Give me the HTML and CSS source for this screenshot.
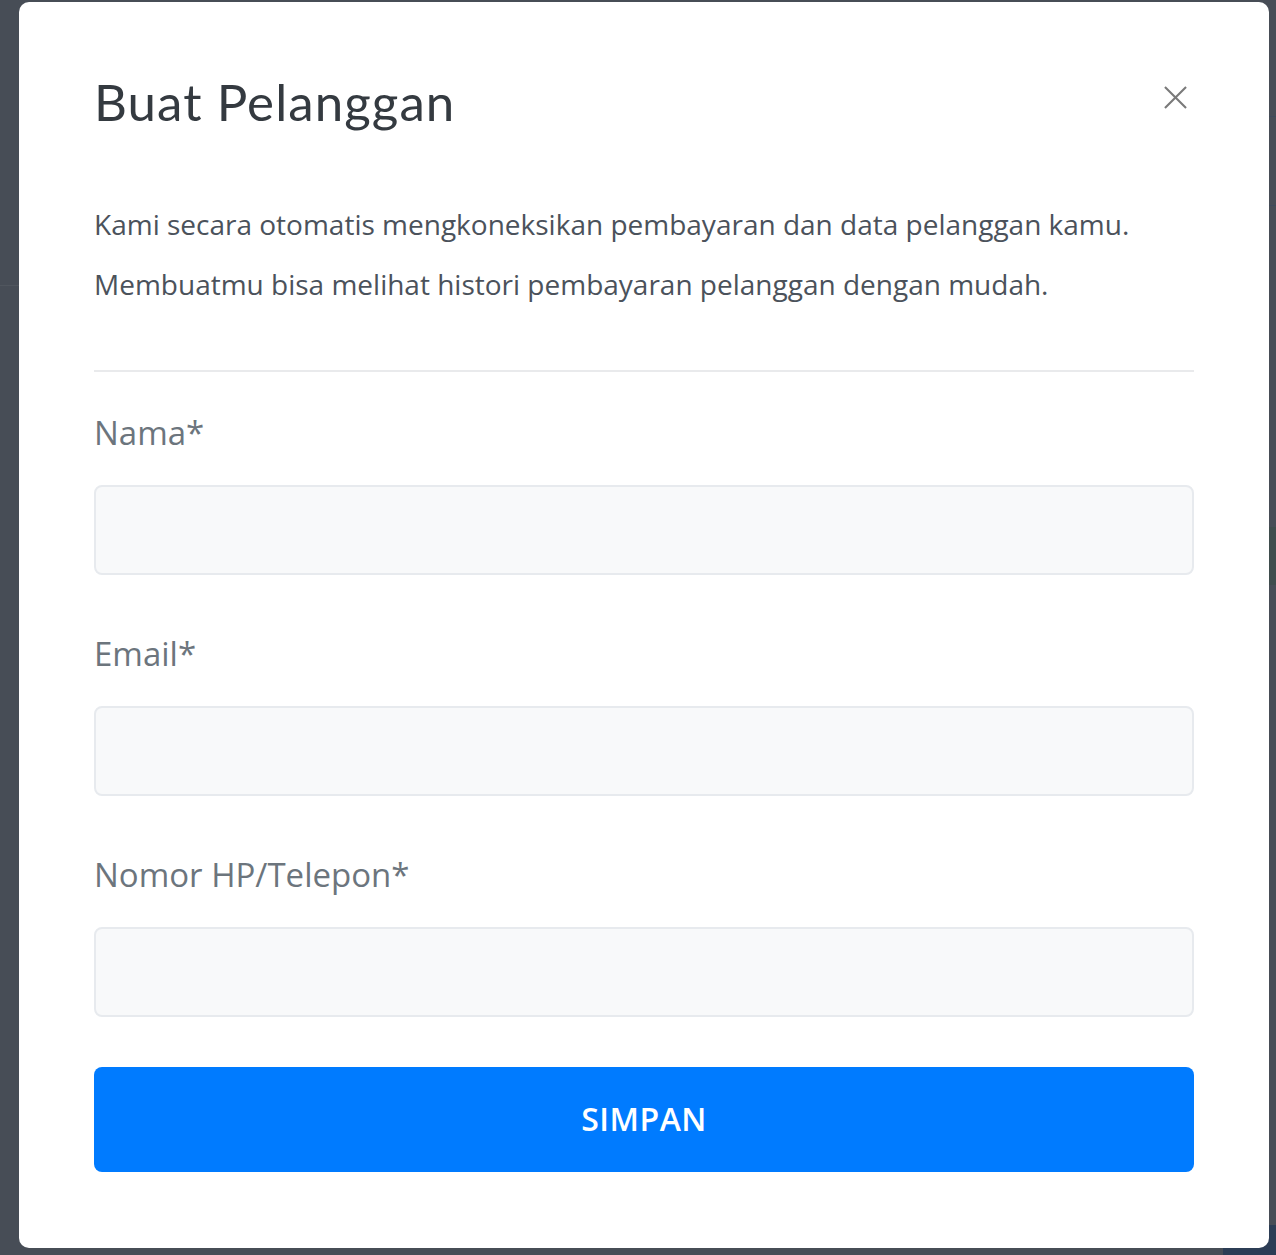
FILE: index.html
```html
<!DOCTYPE html>
<html lang="id">
<head>
<meta charset="utf-8">
<title>Buat Pelanggan</title>
<link rel="stylesheet" href="styles.css">
</head>
<body>
<div class="backdrop">
  <div class="modal" role="dialog" aria-labelledby="modal-title">
    <div class="modal-header">
      <h1 class="modal-title" id="modal-title">Buat Pelanggan</h1>
      <button class="close-btn" type="button" aria-label="Tutup">
        <svg width="24" height="24" viewBox="0 0 24 24" aria-hidden="true">
          <path d="M1 1 L23 23 M23 1 L1 23" stroke="#7a7a7a" stroke-width="2.2" stroke-linecap="butt" fill="none"/>
        </svg>
      </button>
    </div>
    <div class="modal-desc">
      <p>Kami secara otomatis mengkoneksikan pembayaran dan data pelanggan kamu.</p>
      <p>Membuatmu bisa melihat histori pembayaran pelanggan dengan mudah.</p>
    </div>
    <hr class="divider">
    <form class="form">
      <div class="field">
        <label class="label" for="nama">Nama*</label>
        <input class="input" id="nama" type="text">
      </div>
      <div class="field">
        <label class="label" for="email">Email*</label>
        <input class="input" id="email" type="email">
      </div>
      <div class="field">
        <label class="label" for="telp">Nomor HP/Telepon*</label>
        <input class="input" id="telp" type="tel">
      </div>
      <button class="submit" type="button">SIMPAN</button>
    </form>
  </div>
</div>
</body>
</html>
```
FILE: styles.css
```css
html, body {
  margin: 0;
  padding: 0;
  height: 100%;
}

body {
  font-family: "Open Sans", "Noto Sans", sans-serif;
  background-color: #474d56;
  background-image:
    linear-gradient(#2c3d55, #2c3d55),
    linear-gradient(#3e4a5c, #3e4a5c),
    linear-gradient(#3e4a5c, #3e4a5c),
    linear-gradient(#3f4d4d, #3f4d4d),
    linear-gradient(#50565e, #50565e);
  background-repeat: no-repeat;
  background-size: 53px 30px, 20px 1px, 20px 1px, 20px 58px, 19px 1px;
  background-position: 1223px 1225px, 1256px 116px, 1256px 205px, 1256px 527px, 0 285px;
}

.backdrop {
  position: fixed;
  inset: 0;
}

.modal {
  position: absolute;
  left: 19px;
  top: 2px;
  width: 1250px;
  height: 1246px;
  box-sizing: border-box;
  padding: 75px;
  background: #ffffff;
  border-radius: 10px;
  display: flex;
  flex-direction: column;
}

.modal-header {
  display: flex;
  justify-content: space-between;
  align-items: flex-start;
  margin-bottom: 67px;
}

.modal-title {
  margin: 0;
  font-family: "Lato", "Open Sans", sans-serif;
  font-weight: 400;
  font-size: 51px;
  line-height: 50px;
  letter-spacing: 1.1px;
  color: #343a40;
}

.close-btn {
  width: 40px;
  height: 40px;
  padding: 0;
  margin: 0;
  border: 0;
  background: transparent;
  display: flex;
  align-items: center;
  justify-content: center;
  cursor: pointer;
  margin-right: -1px;
}

.close-btn svg {
  width: 23px;
  height: 23px;
}

.modal-desc {
  margin-bottom: 56px;
}

.modal-desc p {
  margin: 0;
  font-size: 28px;
  line-height: 60px;
  color: #4b525b;
}

.divider {
  margin: 0;
  border: 0;
  border-top: 2px solid #e9eaec;
}

.form {
  display: flex;
  flex-direction: column;
  margin-top: 35px;
}

.field {
  display: flex;
  flex-direction: column;
  margin-bottom: 53px;
}

.label {
  font-size: 33px;
  line-height: 48px;
  color: #6c757d;
  margin-top: 2px;
  margin-bottom: 28px;
}

.input {
  box-sizing: border-box;
  height: 90px;
  width: 100%;
  margin: 0;
  padding: 0 20px;
  background: #f8f9fa;
  border: 2px solid #e7eaee;
  border-radius: 8px;
  font-family: inherit;
  font-size: 28px;
}

.field:last-of-type {
  margin-bottom: 50px;
}

.submit {
  height: 105px;
  width: 100%;
  margin: 0;
  padding: 0 0 2px;
  border: 0;
  border-radius: 8px;
  background: #007bff;
  color: #ffffff;
  font-family: "Open Sans", sans-serif;
  font-weight: 600;
  font-size: 32px;
  letter-spacing: 0.5px;
  cursor: pointer;
}
```
